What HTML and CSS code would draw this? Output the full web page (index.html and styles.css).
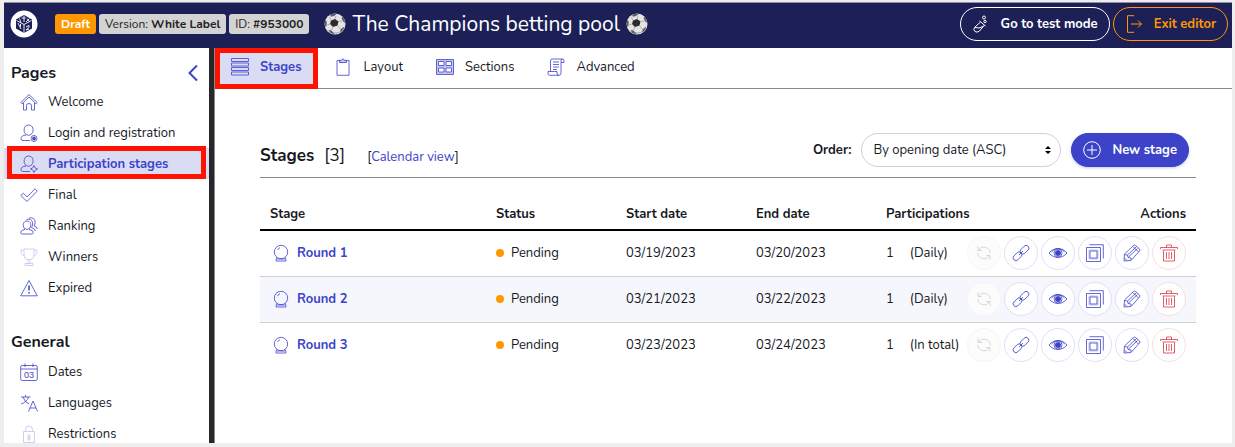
FILE: index.html
```html
<!DOCTYPE html>
<html lang="en">
<head>
    <meta charset="UTF-8">
    <title>The Champions betting pool</title>
    <link rel="stylesheet" href="styles.css">
</head>
<body>

<!-- shared icons -->
<svg class="sprite" aria-hidden="true">
    <symbol id="ball" viewBox="0 0 22 22">
        <circle cx="11" cy="11" r="10.5" fill="#e4e4e4"/>
        <path d="M3 17a10.5 10.5 0 0 0 16 0c-5 3-11 3-16 0z" fill="#b5b5b5"/>
        <path d="M7 7.500l4-1.500 3.500 2.500-1 4-4.500 1.500-3-3z" fill="#2c2c2e"/>
        <path d="M6 1.800l3.500-1.200 3 .6-2.500 1.800-3 .8zM.6 10l1-3.500 1.200 2.500-.4 4-1.200 1zM18 3.200l2.400 3.300.8 3.500-2-1.500-1.500-3zM4.500 17l3 .5 2.500 3-.5.6-3-1.100zM16.500 16.500l3-2.500.7.800-2 3.200-2 1.400z" fill="#5c5c5e"/>
        <path d="M11 6l1-3M14.500 8.500l4-.5M13.500 12.500l3 4M9 14l-2 3.500M6 11l-3.500 1M7 7.500L5.500 4" fill="none" stroke="#999" stroke-width=".7"/>
    </symbol>
    <symbol id="crystal" viewBox="0 0 18 18">
        <circle cx="9" cy="8" r="6.700"/>
        <path d="M4.500 13.500L4 17h10l-.5-3.500M5 15h8M5.500 6A4.500 4.500 0 0 1 8 3.700"/>
    </symbol>
    <symbol id="refresh" viewBox="0 0 18 18">
        <path d="M3 2.500v4h4M3.500 6.500A6.300 6.300 0 0 1 15.300 9M15 15.500v-4h-4M14.500 11.500A6.300 6.300 0 0 1 2.700 9"/>
    </symbol>
    <symbol id="link" viewBox="0 0 18 18">
        <rect x="7.500" y="3" width="10" height="5.500" rx="2.750" transform="rotate(-45 12.500 5.750)"/>
        <rect x=".5" y="9.500" width="10" height="5.500" rx="2.750" transform="rotate(-45 5.500 12.250)"/>
        <path d="M7 11l4-4"/>
    </symbol>
    <symbol id="eye" viewBox="0 0 20 18">
        <path d="M1 9c5-6 13-6 18 0-5 6-13 6-18 0z"/>
        <path d="M3.500 8c4-4.500 9-4.500 13 0"/>
        <circle cx="10" cy="9" r="4"/>
        <circle cx="10" cy="9" r="2.600" class="solid"/>
    </symbol>
    <symbol id="copy" viewBox="0 0 18 18">
        <path d="M.5 3.500h14v14H.5zM4 7h7v7H4zM3.500 .7h13.800v13.800"/>
        <path d="M3 6h9v9H3z" opacity=".4"/>
    </symbol>
    <symbol id="pencil" viewBox="0 0 18 18">
        <path d="M1 17l.5-7L10.500 1.500q1-1 2 0L16.500 5q1 1 0 2L8 16.500zM1.500 10.500l3 .5.5 2.500 3 .5v2M4.500 11l9-8.500M5.500 13l9-8.500M10 2.500L15.500 8M1.500 14l2.500 2.500"/>
    </symbol>
    <symbol id="trash" viewBox="0 0 18 18">
        <path d="M.5 3.500h17M6.500 3.500V1h5v2.500M2.500 6h13M3.500 6.500V17h11V6.500M6.500 8v7M9 8v7M11.500 8v7M.5 3.500V5M17.500 3.500V5"/>
    </symbol>
</svg>

<div class="app">
    <header class="topbar">
        <a class="logo" href="#" aria-label="Home">
            <svg viewBox="0 0 28 28">
                <circle cx="14" cy="14" r="13.500" fill="#fff"/>
                <path d="M14 5l8 4.500v9L14 23l-8-4.500v-9z" fill="#1c2057"/>
                <path d="M6.500 10.500l7.500 4 7.500-4M14 14.500V23M9.500 8.500l1.500 4M14 6v6M11.500 8h4M17 8.500l2 2.500M19.500 8.500L16 12M8 13l3 6M10.500 14v3M16 17l3-1.500v2l-3 2.500 3-1" fill="none" stroke="#fff" stroke-width=".9"/>
            </svg>
        </a>
        <div class="badges">
            <span class="badge draft">Draft</span>
            <span class="badge">Version: <b>White Label</b></span>
            <span class="badge">ID: <b>#953000</b></span>
        </div>
        <h1>
            <svg class="ball"><use href="#ball"/></svg>
            The Champions betting pool
            <svg class="ball"><use href="#ball"/></svg>
        </h1>
        <div class="topbar-actions">
            <button class="pill test">
                <svg class="icon" viewBox="0 0 18 18"><path d="M8.500 7L2.500 12.500Q1 15 3 16.500t4.500-.5L12.500 10M7.500 6l6 5M3 12.500q4 1.500 8-1"/><circle cx="12" cy="2.500" r="1.500"/><circle cx="13" cy="6.500" r="1.200"/></svg>
                Go to test mode
            </button>
            <button class="pill exit">
                <svg class="icon" viewBox="0 0 18 18"><path d="M9 .7H2.500v16.600H9M6 9h10.500M13 5.500L16.500 9 13 12.500"/></svg>
                Exit editor
            </button>
        </div>
    </header>

    <div class="body">
        <nav class="sidebar">
            <div class="sidebar-head">
                <h2>Pages</h2>
                <button class="collapse" aria-label="Collapse menu">
                    <svg viewBox="0 0 12 18"><path d="M10 1.500L2.500 9l7.500 7.500"/></svg>
                </button>
            </div>
            <ul>
                <li><a href="#">
                    <svg class="icon" viewBox="0 0 18 18"><path d="M.8 9.500L9 1.500l8.200 8-1.200 1.300L9 4 2 10.800zM3.500 10v7h3v-4.500q0-2 2.500-2t2.500 2V17h3v-7"/></svg>
                    Welcome</a></li>
                <li><a href="#">
                    <svg class="icon" viewBox="0 0 18 18"><path d="M5 9.500C3.500 7.500 3.500 1 8.500 1S14 7 12 9.500Q8.500 13 5 9.500zM6 11q-5 .5-5 3.500 0 2 2 2h7"/><circle cx="14" cy="14.500" r="3"/><circle cx="14" cy="14.500" r="1.500" class="solid"/></svg>
                    Login and registration</a></li>
                <li><a class="active" href="#">
                    <svg class="icon" viewBox="0 0 18 18"><path d="M5 9.500C3.500 7.500 3.500 1 8.500 1S14 7 12 9.500Q8.500 13 5 9.500zM6 11q-5 .5-5 3.500 0 2 2 2h7M14 10.500l1.200 2.300 2.300 1.200-2.300 1.200L14 17.500l-1.200-2.300-2.300-1.200 2.300-1.200z"/></svg>
                    Participation stages</a></li>
                <li><a href="#">
                    <svg class="icon" viewBox="0 0 18 18"><path d="M.8 9.500l2.500-2.300L7 11l8-8.200 2.200 2.300L7 15.500z"/></svg>
                    Final</a></li>
                <li><a href="#">
                    <svg class="icon" viewBox="0 0 18 18"><path d="M4 11C2.500 8.500 3 4 7 4s4.500 4.500 3 7q-3 3-6 0zM5 12.500q-4.300.5-4.300 2.800 0 1.700 1.500 1.700h9.500q1.500 0 1.500-1.700 0-2.300-4.200-2.800M6.500 2.500q5-1.500 6 3 .5 3-1 5 3.500 1 4 3.500M9 1q5-1 6 3 .5 3-1 5 3 .5 3.300 3"/></svg>
                    Ranking</a></li>
                <li><a href="#">
                    <svg class="icon faint" viewBox="0 0 18 18"><path d="M4 1h10v6q0 4.500-5 4.500T4 7zM4 2H1q-.5 5 3.500 6M14 2h3q.5 5-3.500 6M8 11.500v4M10 11.500v4M5 15.500h8v2H5z"/></svg>
                    Winners</a></li>
                <li><a href="#">
                    <svg class="icon" viewBox="0 0 18 18"><path d="M9 1.500L17.300 16.800H.7z"/><path d="M9 6.500v5M9 13v1.500" stroke-width="1.500"/></svg>
                    Expired</a></li>
            </ul>
            <div class="sidebar-head">
                <h2>General</h2>
            </div>
            <ul>
                <li><a href="#">
                    <svg class="icon" viewBox="0 0 18 18"><rect x=".7" y="2.500" width="16.600" height="15" rx="1.500"/><path d="M1 6h16M5 .5v3.500M13 .5v3.500"/><text x="9" y="15" text-anchor="middle">03</text></svg>
                    Dates</a></li>
                <li><a href="#">
                    <svg class="icon" viewBox="0 0 18 18"><path d="M1 3h9.500M5.500 1v2M3 3q1.500 5 6 7M8.500 3Q7 8 1 10M8.500 17.500L13 7l4.500 10.500M10 14h6"/></svg>
                    Languages</a></li>
                <li><a href="#">
                    <svg class="icon faint" viewBox="0 0 18 18"><path d="M3.500 6.500h11v11h-11zM5.500 6.500V4.500q0-3.500 3.500-3.500t3.500 3.500v2"/><path d="M8 10h2v2.500H8zM8 12.500h2V15H8z"/></svg>
                    Restrictions</a></li>
            </ul>
        </nav>

        <main>
            <nav class="tabs">
                <a class="active" href="#">
                    <svg class="icon" viewBox="0 0 18 18"><path d="M.5.5h17v3H.5zM.5 5h17v3H.5zM.5 9.500h17v3H.5zM.5 14h17v3H.5z"/></svg>
                    Stages</a>
                <a href="#">
                    <svg class="icon" viewBox="0 0 18 18"><path d="M3 2.500h12v14.800H3z"/><path d="M5.500 4.500V2.300h2L9 .7l1.500 1.600h2v2.200z" class="tint"/></svg>
                    Layout</a>
                <a href="#">
                    <svg class="icon" viewBox="0 0 18 18"><path d="M.5 1.500h17v15H.5z" class="tint"/><path d="M2.500 3.500h5.500v4H2.500zM10 3.500h5.500v4H10zM2.500 10h5.500v4H2.500zM10 10h5.500v4H10z" fill="#fff"/></svg>
                    Sections</a>
                <a href="#">
                    <svg class="icon" viewBox="0 0 18 18"><path d="M14 5V3q0-2 1.500-2T17 3v1.500h-3M15.500 1H5Q3.500 1 3.500 3v10.500M14 5v10q0 2.300-2 2.300t-2-2.300v-1.500H1V15q0 2.300 2 2.300h9M6 4h6M6 6.500h6M6 9h6M6 11.500h4"/></svg>
                    Advanced</a>
            </nav>

            <section class="content">
                <div class="toolbar">
                    <h2>Stages</h2>
                    <span class="count">[3]</span>
                    <span class="calendar">[<a href="#">Calendar view</a>]</span>
                    <div class="controls">
                        <label for="order">Order:</label>
                        <div class="select">
                            <select id="order">
                                <option>By opening date (ASC)</option>
                            </select>
                            <svg viewBox="0 0 6 8"><path d="M0 3l3-3 3 3zM0 5h6L3 8z"/></svg>
                        </div>
                        <button class="pill new">
                            <svg class="icon" viewBox="0 0 18 18"><circle cx="9" cy="9" r="8.300"/><path d="M9 4v10M4 9h10"/></svg>
                            New stage
                        </button>
                    </div>
                </div>

                <table>
                    <thead>
                        <tr>
                            <th>Stage</th>
                            <th class="col">Status</th>
                            <th class="col">Start date</th>
                            <th class="col">End date</th>
                            <th class="part">Participations</th>
                            <th class="actions">Actions</th>
                        </tr>
                    </thead>
                    <tbody id="rows"></tbody>
                </table>
            </section>
        </main>
    </div>
</div>

<script>
    var stages = [
        {name: "Round 1", start: "03/19/2023", end: "03/20/2023", limit: "Daily"},
        {name: "Round 2", start: "03/21/2023", end: "03/22/2023", limit: "Daily"},
        {name: "Round 3", start: "03/23/2023", end: "03/24/2023", limit: "In total"}
    ];
    var actions = [["refresh", "Restart"], ["link", "Link"], ["eye", "View"], ["copy", "Duplicate"], ["pencil", "Edit"], ["trash", "Delete"]];

    // one round button per action
    var buttons = "";
    for (var i = 0; i < actions.length; i++) {
        buttons += '<button class="round ' + actions[i][0] + '" aria-label="' + actions[i][1] + '"' + (i == 0 ? " disabled" : "") + '>' +
            '<svg class="icon"><use href="#' + actions[i][0] + '"/></svg></button>';
    }

    var html = "";
    stages.forEach(function (s) {
        html += '<tr>' +
            '<td><a class="stage" href="#"><svg class="icon"><use href="#crystal"/></svg>' + s.name + '</a></td>' +
            '<td><span class="status">Pending</span></td>' +
            '<td>' + s.start + '</td>' +
            '<td>' + s.end + '</td>' +
            '<td><span class="limit"><span>1</span><span>(' + s.limit + ')</span></span></td>' +
            '<td><div class="buttons">' + buttons + '</div></td>' +
            '</tr>';
    });
    document.getElementById("rows").innerHTML = html;
</script>

</body>
</html>
```
FILE: styles.css
```css
* {
    box-sizing: border-box;
}
body {
    margin: 0;
    font-family: Nunito, "Noto Sans", sans-serif;
    font-size: 13px;
    line-height: 20px;
    color: #17191f;
}
h1, h2, ul {
    margin: 0;
    padding: 0;
}
ul {
    list-style: none;
}
a {
    color: inherit;
    text-decoration: none;
}
button, select {
    font: inherit;
    color: inherit;
    cursor: pointer;
}
b, th, h2 {
    font-weight: 700;
}
.sprite {
    display: none;
}
.icon {
    flex: none;
    width: 18px;
    height: 18px;
    fill: none;
    stroke: #3d43c8;
    stroke-width: .8;
}
.icon text {
    font: 9px "Liberation Sans", sans-serif;
    fill: #3d43c8;
    stroke: none;
}
.solid {
    fill: #3d43c8;
}
.tint {
    fill: #c5c8f2;
}
.faint {
    opacity: .3;
}
.app {
    display: flex;
    flex-direction: column;
    height: 100vh;
    border: 4px solid #eee;
    border-top-width: 2px;
    border-right-width: 3px;
}

/* top bar */
.topbar {
    display: flex;
    align-items: center;
    flex: none;
    height: 46px;
    padding: 0 4px 4px 6px;
    border-top: 1px solid #8f90a6;
    background-color: #1c2057;
    color: #fff;
}
.logo svg {
    display: block;
    width: 28px;
    height: 28px;
}
.badges {
    display: flex;
    gap: 3px;
    margin: 0 15px 0 17px;
}
.badge {
    padding: 0 6px;
    border-radius: 3px;
    background-color: #d3d3d3;
    color: #222;
    font-size: 12px;
    white-space: nowrap;
}
.draft {
    background-color: #ff9800;
    color: #fff;
    font-weight: 700;
}
h1 {
    display: flex;
    align-items: center;
    gap: 6px;
    font-size: 21px;
    font-weight: 400;
    line-height: 28px;
    white-space: nowrap;
}
.ball {
    width: 22px;
    height: 22px;
}
.topbar-actions {
    display: flex;
    gap: 3px;
    margin-left: auto;
}
.pill {
    display: flex;
    align-items: center;
    gap: 11px;
    height: 34px;
    padding: 0 11px;
    border: 1px solid #fff;
    border-radius: 17px;
    background: none;
    font-weight: 700;
    white-space: nowrap;
}
.pill .icon {
    stroke: currentColor;
    stroke-width: 1;
}
.exit {
    border-color: #ff9800;
    color: #ff9800;
}

/* sidebar */
.body {
    display: flex;
    flex: 1;
    min-height: 0;
}
.sidebar {
    flex: none;
    width: 210px;
    padding-top: 12px;
    border-right: 5px solid #25272b;
    overflow: hidden;
}
.sidebar-head {
    display: flex;
    justify-content: space-between;
    align-items: center;
    height: 26px;
    padding: 0 10px 0 7px;
}
.sidebar h2 {
    font-size: 16px;
}
.sidebar ul + .sidebar-head {
    height: 28px;
    margin-top: 25px;
}
.collapse {
    padding: 0;
    border: none;
    background: none;
}
.collapse svg {
    display: block;
    width: 12px;
    height: 18px;
    fill: none;
    stroke: #3d43c8;
    stroke-width: 2;
}
.sidebar li a {
    display: flex;
    align-items: center;
    gap: 10px;
    height: 31px;
    padding-left: 16px;
}
.sidebar .active, .tabs .active {
    position: relative;
    background-color: #dadcf4;
    color: #3d43c8;
    font-weight: 700;
}
/* red marker around the current entries */
.active::after {
    content: "";
    position: absolute;
    inset: -2px 3px 0;
    border: 5px solid #ff1200;
}
.tabs .active::after {
    inset: 0 0 -1px;
}

/* main */
main {
    flex: 1;
    min-width: 0;
    border-left: 1px solid #8a8a8a;
}
.tabs {
    display: flex;
    height: 41px;
    border-bottom: 1px solid #8a8a8a;
}
.tabs a {
    display: flex;
    align-items: center;
    gap: 11px;
    padding: 0 17px 2px 16px;
}
.content {
    padding: 44px 36px 0 45px;
}
.toolbar {
    display: flex;
    align-items: flex-end;
    padding: 0 7px 10px 0;
    border-bottom: 1px solid #8a8a8a;
}
.toolbar h2, .count {
    font-size: 17px;
    line-height: 22px;
}
.count {
    margin: 0 22px 0 10px;
}
.calendar a {
    color: #3d43c8;
}
.controls {
    display: flex;
    align-items: center;
    margin-left: auto;
}
.controls label {
    font-weight: 700;
}
.select {
    position: relative;
    width: 200px;
    margin: 0 10px;
}
.select select {
    display: block;
    width: 100%;
    height: 34px;
    padding: 0 11px;
    border: 1px solid #d0d0d6;
    border-radius: 17px;
    background-color: #fff;
    appearance: none;
}
.select svg {
    position: absolute;
    top: 13px;
    right: 10px;
    width: 6px;
    height: 8px;
    pointer-events: none;
}
.new {
    border-color: #3d43c8;
    background-color: #3d43c8;
    color: #fff;
    box-shadow: 0 1px 3px #c5c8f2;
}

/* stages table */
table {
    width: 100%;
    margin-top: 20px;
    border-collapse: collapse;
    table-layout: fixed;
}
th {
    padding: 6px 10px 5px;
    border-bottom: 2px solid #000;
    text-align: left;
}
.col {
    width: 130px;
}
.part {
    width: 80px;
}
.part, .limit {
    white-space: nowrap;
}
.actions {
    width: 240px;
    text-align: right;
}
td {
    height: 46px;
    padding: 0 10px;
    border-bottom: 1px solid #cfcfd6;
}
tr:last-child td {
    border-bottom: none;
}
tbody tr:nth-child(even) {
    background-color: #f6f7fc;
}
.stage {
    display: flex;
    align-items: center;
    gap: 7px;
    padding-left: 2px;
    color: #3d43c8;
    font-weight: 700;
}
.status {
    display: flex;
    align-items: center;
    gap: 7px;
}
.status::before {
    content: "";
    width: 8px;
    height: 8px;
    border-radius: 50%;
    background-color: #ff9800;
}
.limit {
    display: flex;
    gap: 16px;
}
.buttons {
    display: flex;
    justify-content: flex-end;
    gap: 3px;
}
.round {
    display: flex;
    align-items: center;
    justify-content: center;
    flex: none;
    width: 34px;
    height: 34px;
    padding: 0;
    border: 1px solid #dfdff8;
    border-radius: 50%;
    background-color: #fff;
}
.round.eye .icon {
    width: 20px;
}
.round:disabled {
    border-color: #f6f6f6;
    background-color: #fcfcfc;
    cursor: default;
}
.round:disabled .icon {
    stroke: #ccc;
}
.round.trash {
    border-color: #fbdce0;
}
.round.trash .icon {
    stroke: #dc3545;
}
```
